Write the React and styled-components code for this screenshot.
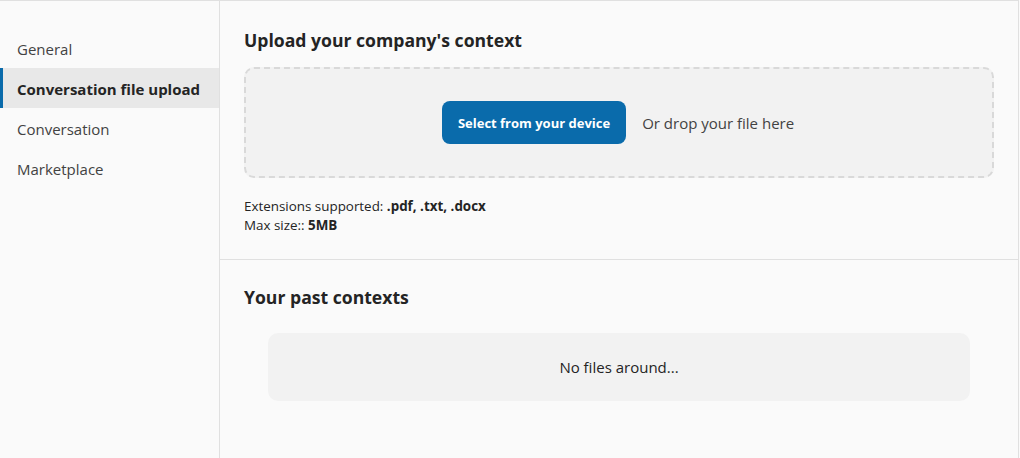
import React from 'react'
import styled, { createGlobalStyle } from 'styled-components'

const GlobalStyle = createGlobalStyle`
    html, body {
        margin: 0;
        padding: 0;
        background-color: #fafafa;
        font-family: "Open Sans", "Noto Sans", sans-serif;
        color: #242424;
    }
`;

const Layout = styled.div`
    display: flex;
    width: 1019px;
    height: 458px;
    box-sizing: border-box;
    border-top: 1px solid #e0e0e0;
    border-right: 1px solid #e0e0e0;
    background-color: #fafafa;
`;

const Sidebar = styled.nav`
    width: 219px;
    flex-shrink: 0;
    border-right: 1px solid #e0e0e0;
    padding-top: 27px;
`;

const NavItem = styled.div`
    height: 40px;
    display: flex;
    align-items: center;
    padding-left: 14px;
    padding-top: 1px;
    box-sizing: border-box;
    font-size: 15px;
    font-weight: ${p => (p.$active ? 700 : 400)};
    color: ${p => (p.$active ? '#242424' : '#424242')};
    background-color: ${p => (p.$active ? '#e8e8e8' : 'transparent')};
    border-left: 3px solid ${p => (p.$active ? '#0a6bab' : 'transparent')};
`;

const Main = styled.main`
    flex: 1;
    display: flex;
    flex-direction: column;
`;

const Section = styled.section`
    padding: ${p => p.$top}px 24px ${p => p.$bottom}px 24px;
    border-bottom: ${p => (p.$divider ? '1px solid #e0e0e0' : 'none')};
`;

const Title = styled.h2`
    margin: 0;
    font-size: 17.6px;
    line-height: 24px;
    font-weight: 700;
    color: #242424;
`;

const DropZone = styled.div`
    margin-top: 15px;
    height: 111px;
    box-sizing: border-box;
    border: 2px dashed #d9d9d9;
    border-radius: 10px;
    background-color: #f2f2f2;
    display: flex;
    align-items: center;
    justify-content: center;
    gap: 16px;
`;

const SelectButton = styled.button`
    height: 43px;
    margin-left: -2px;
    padding: 0 16px;
    border: none;
    border-radius: 8px;
    background-color: #0a6bab;
    color: #ffffff;
    font-family: inherit;
    font-size: 13px;
    font-weight: 700;
    cursor: pointer;
`;

const DropText = styled.span`
    font-size: 15px;
    color: #424242;
`;

const Info = styled.div`
    margin-top: 19px;
    font-size: 13.4px;
    line-height: 19px;
    color: #242424;

    b {
        font-weight: 700;
    }
`;

const EmptyBox = styled.div`
    margin: 24px 24px 0 24px;
    height: 68px;
    border-radius: 10px;
    background-color: #f2f2f2;
    display: flex;
    align-items: center;
    justify-content: center;
    font-size: 15px;
    color: #242424;
`;

const navItems = ['General', 'Conversation file upload', 'Conversation', 'Marketplace']

const App = () => {
    return (
        <>
            <GlobalStyle />
            <Layout>
                <Sidebar>
                    {navItems.map(item => (
                        <NavItem key={item} $active={item === 'Conversation file upload'}>
                            {item}
                        </NavItem>
                    ))}
                </Sidebar>
                <Main>
                    <Section $top={27} $bottom={24} $divider>
                        <Title>Upload your company's context</Title>
                        <DropZone>
                            <SelectButton>Select from your device</SelectButton>
                            <DropText>Or drop your file here</DropText>
                        </DropZone>
                        <Info>
                            Extensions supported: <b>.pdf, .txt, .docx</b>
                            <br />
                            Max size:: <b>5MB</b>
                        </Info>
                    </Section>
                    <Section $top={25} $bottom={24}>
                        <Title>Your past contexts</Title>
                        <EmptyBox>No files around...</EmptyBox>
                    </Section>
                </Main>
            </Layout>
        </>
    )
}

export default App
